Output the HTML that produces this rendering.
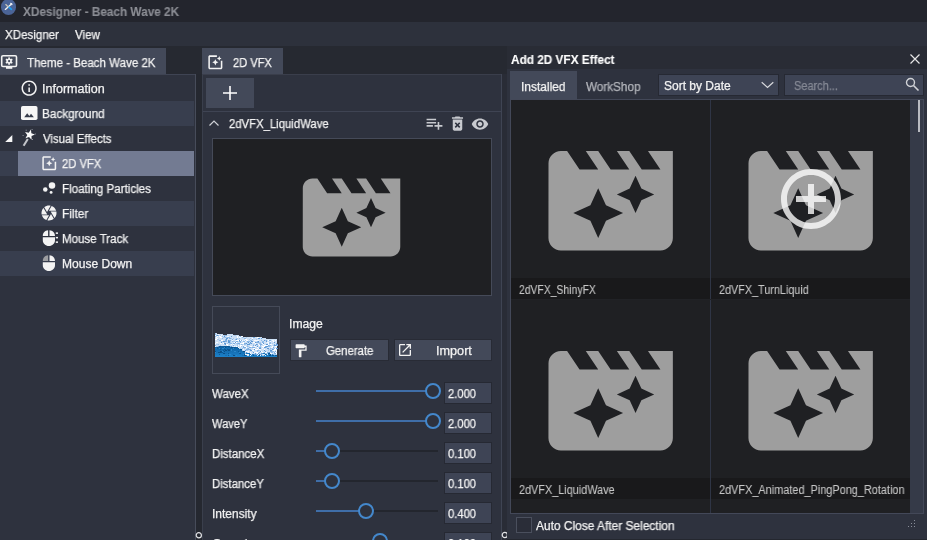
<!DOCTYPE html>
<html><head><meta charset="utf-8"><title>XDesigner - Beach Wave 2K</title>
<style>
html,body{margin:0;padding:0;}
body{width:927px;height:540px;overflow:hidden;background:#262931;position:relative;font-family:"Liberation Sans",sans-serif;font-size:12px;color:#f3f3f3;}
.a{position:absolute;}
.t{-webkit-text-stroke:0.25px;will-change:transform;position:absolute;white-space:nowrap;line-height:14px;transform-origin:0 50%;}
svg{position:absolute;overflow:visible;}
.tab{background:#434959;}
.panel{background:#2e323e;}
.row{left:0;width:194px;height:25px;}
.alt{background:#383e4e;}
.sel{background:#737b92;}
.btn{background:#434959;box-shadow:0 0 0 1px #282b35;}
.vbox{left:445px;width:46px;height:20px;background:#3e4455;box-shadow:0 0 0 1px #262933;}
.track{left:316px;width:122px;height:2px;background:#23262e;}
.fill{left:316px;height:2px;background:#3f6ea8;}
.thumb{width:12px;height:12px;border:2px solid #4488cc;border-radius:50%;background:#2e323e;}
.lab{background:#19191b;height:21px;}
.dot{width:1px;height:1px;background:#8a8e99;}
</style></head><body>
<div class="a" style="left:0;top:0;width:927px;height:22px;background:#23252d;"></div>
<div class="a" style="left:0;top:22px;width:927px;height:24px;background:#2d313c;"></div>
<!-- app icon -->
<div class="a" style="left:0.9px;top:-0.600px;width:15.4px;height:15.4px;border-radius:50%;background:#4b6497;"></div>
<svg style="left:0;top:0.400px" width="18" height="16" viewBox="0 0 18 16"><path d="M5.300 9.400L11.200 4.300" stroke="#f4f4f4" stroke-width="1.300" stroke-linecap="round" fill="none"/><path d="M10.200 3.300l1.500 0.300 0.300 1.500" stroke="#f4f4f4" stroke-width="1.100" fill="none"/><path d="M5.800 4.600L8.300 6.900" stroke="#c9c4b4" stroke-width="1.300" stroke-linecap="round"/><path d="M9.200 7.400L11.400 9.300" stroke="#1e9ef0" stroke-width="1.700" stroke-linecap="round"/></svg>

<!-- LEFT PANEL -->
<div class="a tab" style="left:0;top:48px;width:166px;height:26px;"></div>
<svg style="left:0;top:48px" width="20" height="26" viewBox="0 0 20 26"><rect x="1.700" y="7.700" width="14.800" height="10.800" rx="1.300" fill="none" stroke="#f3f3f3" stroke-width="1.600"/><rect x="6" y="19" width="6.300" height="1.800" fill="#f3f3f3"/><g fill="#f3f3f3"><circle cx="9.100" cy="13.100" r="2.700"/><rect x="8.300" y="9.400" width="1.600" height="7.400" /><rect x="8.300" y="9.400" width="1.600" height="7.400" transform="rotate(60 9.100 13.100)"/><rect x="8.300" y="9.400" width="1.600" height="7.400" transform="rotate(120 9.100 13.100)"/></g><circle cx="9.100" cy="13.100" r="1.100" fill="#434959"/></svg>
<div class="a panel" style="left:0;top:74px;width:196px;height:466px;"></div>
<div class="a" style="left:0;top:74px;width:196px;height:1px;background:#3f4453;"></div>
<div class="a" style="left:195px;top:74px;width:1px;height:466px;background:#474c5a;"></div>
<div class="a" style="left:196px;top:74px;width:6px;height:466px;background:#252830;"></div>
<div class="a row alt" style="top:101px;"></div>
<div class="a row alt" style="top:151px;"></div>
<div class="a row sel" style="top:151px;left:18px;width:176px;"></div>
<div class="a row alt" style="top:201px;"></div>
<div class="a row alt" style="top:251px;"></div>
<svg style="left:19.800px;top:78.600px" width="18.300" height="18.300" viewBox="0 0 24 24"><path fill="#f3f3f3" d="M11 17h2v-6h-2v6zm1-15C6.480 2 2 6.480 2 12s4.480 10 10 10 10-4.480 10-10S17.520 2 12 2zm0 18c-4.410 0-8-3.590-8-8s3.590-8 8-8 8 3.590 8 8-3.590 8-8 8zM11 9h2V7h-2v2z"/></svg>
<svg style="left:20.700px;top:106px" width="16.500" height="14" viewBox="0 0 16.500 14"><rect width="16.500" height="14" rx="1.800" fill="#f6f6f6"/><path d="M3.200 11.200l3-4 2.100 2.700 1.700-2.200 2.900 3.500z" fill="#363c4b"/></svg>
<svg style="left:0;top:126px" width="40" height="25" viewBox="0 0 40 25"><path d="M5.200 15.900h7.100V9.100z" fill="#f6f6f6"/><path d="M23.600 19.800L27.800 13" stroke="#c3c5ca" stroke-width="2.100" stroke-linecap="butt"/><polygon points="30.94,3.57 31.37,7.33 34.99,8.45 31.54,10.03 31.59,13.82 29.03,11.03 25.44,12.25 27.30,8.95 25.04,5.91 28.75,6.66" fill="#fafafa"/><g fill="#8f93a0"><rect x="25.700" y="3.700" width="1" height="1"/><rect x="31.600" y="3" width="1" height="1"/><rect x="34.800" y="7.500" width="1" height="1"/><rect x="22.600" y="9" width="1" height="1"/><rect x="32" y="13" width="1" height="1"/></g></svg>
<svg style="left:39.500px;top:154px" width="18.500" height="18.500" viewBox="0 0 24 24"><path fill="#f3f3f3" d="M19.020 10v9H5V5h9V3H5.020c-1.100 0-2 .9-2 2v14c0 1.100.9 2 2 2h14c1.100 0 2-.9 2-2v-9h-2zM17 10l.940-2.060L20 7l-2.060-.940L17 4l-.940 2.060L14 7l2.060.940zm-3.750.750L12 8l-1.250 2.750L8 12l2.750 1.250L12 16l1.250-2.750L16 12z"/></svg>
<svg style="left:40px;top:176px" width="20" height="25" viewBox="0 0 20 25"><circle cx="12" cy="9.400" r="3.250" fill="#f3f3f3"/><circle cx="5.300" cy="13.600" r="2.250" fill="#f3f3f3"/><circle cx="11.100" cy="16.400" r="1.450" fill="#f3f3f3"/></svg>
<svg style="left:39.700px;top:204.200px" width="18" height="18" viewBox="0 0 24 24"><path fill="#f3f3f3" d="M9.400 10.500l4.770-8.260C13.470 2.090 12.750 2 12 2c-2.400 0-4.600.850-6.320 2.250l3.660 6.350.060-.100zM21.540 9c-.920-2.920-3.150-5.260-6-6.340L11.880 9h9.660zm.260 1h-7.490l.290.500 4.760 8.250C21 16.970 22 14.610 22 12c0-.690-.070-1.350-.200-2zM8.540 12l-3.900-6.750C3.010 7.030 2 9.390 2 12c0 .690.070 1.350.200 2h7.490l-1.150-2zm-6.080 3c.920 2.920 3.150 5.260 6 6.340L12.120 15H2.460zm11.270 0l-3.900 6.760c.700.150 1.420.240 2.170.240 2.400 0 4.600-.850 6.320-2.250l-3.660-6.350-.930 1.600z"/></svg>
<svg style="left:40px;top:226px" width="20" height="25" viewBox="0 0 20 25"><path d="M2.800 9.900c0-3 2.200-5.500 5.300-5.600v5.600zM9.500 4.300c3.100 0.100 5.500 2.600 5.500 5.600H9.500zM2.800 11.200h12.200v3c0 3.200-2.700 5.800-6.100 5.800s-6.100-2.600-6.100-5.800z" fill="#f3f3f3"/><rect x="15.800" y="6.400" width="2.200" height="1.500" fill="#f3f3f3"/><rect x="15.800" y="10.900" width="2.200" height="1.500" fill="#f3f3f3"/><rect x="15.800" y="15.400" width="2.200" height="1.500" fill="#f3f3f3"/></svg>
<svg style="left:40px;top:251px" width="20" height="25" viewBox="0 0 20 25"><path d="M2.800 9.900c0-3 2.200-5.500 5.300-5.600v5.600z" fill="#9c9da0"/><path d="M9.500 4.300c3.100 0.100 5.500 2.600 5.500 5.600H9.500zM2.800 11.200h12.200v3c0 3.200-2.700 5.800-6.100 5.800s-6.100-2.600-6.100-5.800z" fill="#f3f3f3"/></svg>

<!-- MID PANEL -->
<div class="a tab" style="left:202px;top:48px;width:81px;height:26px;"></div>
<svg style="left:205.800px;top:52.700px" width="18.700" height="18.700" viewBox="0 0 24 24"><path fill="#f3f3f3" d="M19.020 10v9H5V5h9V3H5.020c-1.100 0-2 .9-2 2v14c0 1.100.9 2 2 2h14c1.100 0 2-.9 2-2v-9h-2zM17 10l.940-2.060L20 7l-2.060-.940L17 4l-.940 2.060L14 7l2.060.940zm-3.750.750L12 8l-1.250 2.750L8 12l2.750 1.250L12 16l1.250-2.750L16 12z"/></svg>
<div class="a panel" style="left:202px;top:74px;width:300px;height:466px;"></div>
<div class="a" style="left:202px;top:74px;width:300px;height:1px;background:#3a3e4b;"></div>
<div class="a" style="left:202px;top:74px;width:1px;height:466px;background:#3a3f4c;"></div>
<div class="a" style="left:501px;top:74px;width:1px;height:466px;background:#3f4453;"></div>
<div class="a" style="left:502px;top:74px;width:5px;height:466px;background:#292c36;"></div>
<div class="a tab" style="left:206px;top:78px;width:48px;height:30px;"></div>
<svg style="left:222px;top:85px" width="16" height="16" viewBox="0 0 16 16"><path d="M8 1v14M1 8h14" stroke="#fff" stroke-width="1.600" fill="none"/></svg>
<div class="a" style="left:203px;top:111px;width:298px;height:1px;background:#3f4453;"></div>
<svg style="left:209px;top:119px" width="10" height="8" viewBox="0 0 10 8"><path d="M0.500 6.500L5 2l4.500 4.500" stroke="#cfd1d6" stroke-width="1.200" fill="none"/></svg>
<svg style="left:424.800px;top:113.900px" width="19" height="19" viewBox="0 0 24 24"><path fill="#c8cacf" d="M14 10H2v2h12v-2zm0-4H2v2h12V6zm4 8v-4h-2v4h-4v2h4v4h2v-4h4v-2h-4zM2 16h8v-2H2v2z"/></svg>
<svg style="left:447.600px;top:114px" width="19" height="19" viewBox="0 0 24 24"><path fill="#c8cacf" d="M6 19c0 1.100.9 2 2 2h8c1.100 0 2-.9 2-2V7H6v12zm2.460-7.120l1.410-1.410L12 12.590l2.120-2.120 1.410 1.410L13.410 14l2.120 2.120-1.410 1.410L12 15.410l-2.120 2.120-1.410-1.410L10.590 14l-2.130-2.120zM15.500 4l-1-1h-5l-1 1H5v2h14V4z"/></svg>
<svg style="left:471px;top:115.300px" width="18" height="18" viewBox="0 0 24 24"><path fill="#c8cacf" d="M12 4.500C7 4.500 2.730 7.610 1 12c1.730 4.390 6 7.500 11 7.500s9.270-3.110 11-7.500c-1.730-4.390-6-7.500-11-7.500zM12 17c-2.760 0-5-2.240-5-5s2.240-5 5-5 5 2.240 5 5-2.240 5-5 5zm0-8c-1.660 0-3 1.340-3 3s1.340 3 3 3 3-1.340 3-3-1.340-3-3-3z"/></svg>
<div class="a" style="left:212px;top:138px;width:280px;height:158px;background:#1f2023;border:1px solid #454a58;box-sizing:border-box;"></div>
<svg style="left:293.450px;top:159.300px" width="117" height="117" viewBox="0 0 24 24"><path fill="#9e9e9e" d="M18 4l2 3h-3l-2-3h-2l2 3h-3l-2-3H8l2 3H7L5 4H4c-1.1 0-1.99.9-1.99 2L2 18c0 1.1.9 2 2 2h16c1.1 0 2-.9 2-2V4h-4zm-6.75 11.250L10 18l-1.250-2.750L6 14l2.750-1.250L10 10l1.250 2.750L14 14l-2.750 1.250zm5.690-3.310L16 14l-.940-2.060L13 11l2.060-.940L16 8l.940 2.060L19 11l-2.060.940z"/></svg>
<div class="a" style="left:212px;top:306px;width:68px;height:68px;border:1px solid #454a58;box-sizing:border-box;"></div>
<svg style="left:215px;top:332px" width="62.300" height="25" viewBox="0 0 63 25" preserveAspectRatio="none" shape-rendering="crispEdges">
<defs><linearGradient id="wg" x1="0" y1="0" x2="0" y2="1"><stop offset="0" stop-color="#0d5c9b"/><stop offset="1" stop-color="#1c80c8"/></linearGradient></defs>
<polygon points="0,1.0 3,1.8 6,2.4 9,2.6 12,2.5 15,2.4 18,2.5 21,2.8 24,3.5 27,4.2 30,4.8 33,5.1 36,5.0 39,4.9 42,4.8 45,5.1 48,5.6 51,6.3 54,7.0 57,7.3 60,7.4 63,7.3 63,24.500 0,24.500" fill="#cde0f5"/>
<polygon points="0,14.5 2,14.2 4,13.9 6,13.8 8,13.7 10,13.8 12,14.0 14,14.2 16,14.5 18,14.9 20,15.1 22,14.5 24,16.0 26,17.5 28,19.0 30,20.5 32,21.2 34,21.2 36,21.5 38,22.0 40,22.4 42,22.6 44,22.5 46,22.0 48,21.4 50,21.0 52,20.8 54,21.0 56,21.4 58,21.9 60,22.2 62,22.2 63,24.500 0,24.500" fill="url(#wg)"/>
<path fill="#a9c9ec" d="M0 1h1v1h-1zM5 3h1v1h-1zM19 3h2v1h-2zM8 5h1v1h-1zM9 5h1v1h-1zM11 5h1v1h-1zM28 5h1v1h-1zM31 5h1v1h-1zM16 6h1v1h-1zM18 6h1v1h-1zM21 6h2v1h-2zM35 6h1v1h-1zM2 7h1v1h-1zM3 7h1v1h-1zM34 7h1v1h-1zM41 7h1v1h-1zM30 8h1v1h-1zM44 8h1v1h-1zM51 8h1v1h-1zM6 9h2v1h-2zM15 9h1v1h-1zM18 9h1v1h-1zM19 9h1v1h-1zM9 10h1v1h-1zM15 10h1v1h-1zM32 10h1v1h-1zM45 10h2v1h-2zM55 10h1v1h-1zM12 11h1v1h-1zM14 11h1v1h-1zM21 11h1v1h-1zM58 11h1v1h-1zM1 12h2v1h-2zM9 12h1v1h-1zM14 12h1v1h-1zM22 12h1v1h-1zM24 12h1v1h-1zM27 12h1v1h-1zM30 12h1v1h-1zM38 12h1v1h-1zM5 13h1v1h-1zM22 13h1v1h-1zM32 13h1v1h-1zM42 13h1v1h-1zM59 13h1v1h-1zM1 14h2v1h-2zM26 14h1v1h-1zM33 14h1v1h-1zM46 14h1v1h-1zM36 15h1v1h-1zM25 16h1v1h-1zM29 16h1v1h-1zM57 16h2v1h-2zM59 16h2v1h-2zM54 17h2v1h-2zM56 17h1v1h-1zM27 18h1v1h-1zM31 18h2v1h-2zM44 18h2v1h-2zM54 18h1v1h-1zM37 19h1v1h-1zM60 22h2v1h-2z"/><path fill="#8fbbe8" d="M0 2h1v1h-1zM1 3h1v1h-1zM3 3h1v1h-1zM9 3h1v1h-1zM10 3h2v1h-2zM0 4h1v1h-1zM7 4h1v1h-1zM10 5h1v1h-1zM12 5h1v1h-1zM13 5h2v1h-2zM27 5h1v1h-1zM7 6h1v1h-1zM24 6h1v1h-1zM29 6h2v1h-2zM10 7h1v1h-1zM20 7h1v1h-1zM37 7h1v1h-1zM4 8h2v1h-2zM35 8h2v1h-2zM47 8h1v1h-1zM17 9h1v1h-1zM28 9h2v1h-2zM33 9h2v1h-2zM42 9h1v1h-1zM48 9h2v1h-2zM25 10h1v1h-1zM49 10h1v1h-1zM56 10h1v1h-1zM15 11h2v1h-2zM22 11h1v1h-1zM45 11h2v1h-2zM55 11h2v1h-2zM3 12h1v1h-1zM26 12h1v1h-1zM29 12h1v1h-1zM46 13h1v1h-1zM55 13h2v1h-2zM62 13h2v1h-2zM15 14h1v1h-1zM32 14h1v1h-1zM54 14h2v1h-2zM45 15h1v1h-1zM52 15h1v1h-1zM27 16h1v1h-1zM32 16h1v1h-1zM56 16h1v1h-1zM42 18h2v1h-2zM42 19h1v1h-1zM58 19h2v1h-2zM50 20h1v1h-1zM57 20h2v1h-2zM41 22h1v1h-1zM59 22h1v1h-1z"/><path fill="#f3f8fe" d="M3 2h1v1h-1zM0 3h1v1h-1zM6 3h1v1h-1zM12 4h2v1h-2zM24 5h2v1h-2zM1 6h2v1h-2zM17 8h1v1h-1zM27 8h1v1h-1zM29 8h1v1h-1zM39 8h2v1h-2zM41 8h1v1h-1zM42 8h2v1h-2zM58 8h2v1h-2zM30 9h1v1h-1zM56 9h1v1h-1zM1 10h2v1h-2zM53 10h2v1h-2zM0 11h1v1h-1zM5 11h2v1h-2zM25 11h2v1h-2zM40 11h1v1h-1zM48 11h1v1h-1zM54 11h1v1h-1zM16 12h1v1h-1zM43 12h1v1h-1zM44 12h1v1h-1zM57 12h1v1h-1zM23 13h1v1h-1zM28 13h1v1h-1zM0 14h1v1h-1zM19 14h1v1h-1zM29 14h1v1h-1zM39 14h2v1h-2zM49 15h1v1h-1zM57 15h2v1h-2zM43 16h1v1h-1zM48 16h1v1h-1zM28 17h1v1h-1zM44 17h1v1h-1zM46 17h1v1h-1zM32 19h2v1h-2zM62 19h1v1h-1zM33 20h1v1h-1zM35 20h1v1h-1zM39 20h2v1h-2zM35 21h1v1h-1zM42 21h1v1h-1zM56 21h2v1h-2zM43 22h2v1h-2z"/><path fill="#5d98d4" d="M2 3h1v1h-1zM9 4h1v1h-1zM16 4h1v1h-1zM11 6h2v1h-2zM43 6h1v1h-1zM44 6h2v1h-2zM47 6h1v1h-1zM11 7h1v1h-1zM21 7h1v1h-1zM13 8h1v1h-1zM24 8h1v1h-1zM50 8h1v1h-1zM8 9h2v1h-2zM13 9h2v1h-2zM36 9h2v1h-2zM43 9h2v1h-2zM52 9h1v1h-1zM6 10h1v1h-1zM13 10h1v1h-1zM14 10h1v1h-1zM20 10h1v1h-1zM33 10h1v1h-1zM35 10h1v1h-1zM40 10h1v1h-1zM60 10h1v1h-1zM9 11h2v1h-2zM31 11h1v1h-1zM36 11h1v1h-1zM49 11h1v1h-1zM10 12h1v1h-1zM32 12h1v1h-1zM33 12h2v1h-2zM41 12h1v1h-1zM52 12h2v1h-2zM62 12h2v1h-2zM40 13h1v1h-1zM60 13h2v1h-2zM3 14h1v1h-1zM16 14h1v1h-1zM42 14h1v1h-1zM52 14h2v1h-2zM50 15h2v1h-2zM45 16h2v1h-2zM53 16h2v1h-2zM62 16h2v1h-2zM39 17h1v1h-1zM58 17h1v1h-1zM30 18h1v1h-1zM35 18h2v1h-2zM50 18h1v1h-1zM56 18h2v1h-2zM46 19h1v1h-1zM51 19h1v1h-1zM31 20h1v1h-1zM38 20h1v1h-1zM55 20h1v1h-1zM40 21h1v1h-1zM43 21h1v1h-1zM47 21h2v1h-2zM39 22h2v1h-2zM42 22h1v1h-1z"/><path fill="#ffffff" d="M2 4h1v1h-1zM4 4h1v1h-1zM5 4h1v1h-1zM22 4h1v1h-1zM26 4h2v1h-2zM1 5h1v1h-1zM5 5h2v1h-2zM22 5h1v1h-1zM42 5h2v1h-2zM37 6h1v1h-1zM0 7h2v1h-2zM30 7h2v1h-2zM6 8h1v1h-1zM7 8h1v1h-1zM21 8h2v1h-2zM23 8h1v1h-1zM25 8h1v1h-1zM31 8h2v1h-2zM54 8h1v1h-1zM61 8h1v1h-1zM59 9h1v1h-1zM19 10h1v1h-1zM21 10h1v1h-1zM28 10h1v1h-1zM38 10h1v1h-1zM39 10h1v1h-1zM8 11h1v1h-1zM27 11h2v1h-2zM11 12h2v1h-2zM18 12h1v1h-1zM49 12h1v1h-1zM54 12h1v1h-1zM56 12h1v1h-1zM12 13h1v1h-1zM25 13h2v1h-2zM45 13h1v1h-1zM50 13h2v1h-2zM52 13h2v1h-2zM21 14h1v1h-1zM25 14h1v1h-1zM30 14h1v1h-1zM35 14h2v1h-2zM48 14h1v1h-1zM49 14h2v1h-2zM58 14h1v1h-1zM61 14h1v1h-1zM62 14h1v1h-1zM23 15h1v1h-1zM31 15h1v1h-1zM42 15h1v1h-1zM38 16h2v1h-2zM61 16h1v1h-1zM40 17h1v1h-1zM41 17h2v1h-2zM45 17h1v1h-1zM50 17h1v1h-1zM60 17h2v1h-2zM37 18h1v1h-1zM38 18h1v1h-1zM59 18h2v1h-2zM62 18h1v1h-1zM31 19h1v1h-1zM47 19h1v1h-1zM41 20h2v1h-2zM48 20h1v1h-1zM51 20h2v1h-2zM61 20h1v1h-1zM62 21h1v1h-1z"/><path fill="#7eaee0" d="M25 4h1v1h-1zM38 5h2v1h-2zM14 6h2v1h-2zM17 7h1v1h-1zM10 8h2v1h-2zM14 8h2v1h-2zM26 8h1v1h-1zM52 8h1v1h-1zM55 8h2v1h-2zM10 9h2v1h-2zM21 9h2v1h-2zM24 9h1v1h-1zM25 9h1v1h-1zM32 9h1v1h-1zM41 10h1v1h-1zM42 10h2v1h-2zM48 10h1v1h-1zM18 11h2v1h-2zM23 11h2v1h-2zM29 11h1v1h-1zM30 11h1v1h-1zM34 11h2v1h-2zM62 11h1v1h-1zM42 12h1v1h-1zM46 12h2v1h-2zM60 12h1v1h-1zM0 13h1v1h-1zM18 13h1v1h-1zM38 13h1v1h-1zM54 13h1v1h-1zM28 14h1v1h-1zM51 14h1v1h-1zM28 15h1v1h-1zM29 15h2v1h-2zM34 15h1v1h-1zM35 15h1v1h-1zM37 15h2v1h-2zM39 15h1v1h-1zM46 15h1v1h-1zM59 15h1v1h-1zM33 16h1v1h-1zM31 17h1v1h-1zM32 17h2v1h-2zM34 17h2v1h-2zM59 17h1v1h-1zM56 19h2v1h-2zM61 19h1v1h-1zM45 20h1v1h-1zM53 20h2v1h-2zM60 20h1v1h-1zM60 21h2v1h-2zM46 22h2v1h-2z"/><path fill="#0b5794" d="M4 14h2v1h-2zM9 14h2v1h-2zM12 14h2v1h-2zM19 15h2v1h-2zM2 16h1v1h-1zM23 16h1v1h-1zM5 17h1v1h-1zM9 17h1v1h-1zM10 17h1v1h-1zM12 17h1v1h-1zM13 17h2v1h-2zM25 17h2v1h-2zM8 18h1v1h-1zM23 19h1v1h-1zM6 20h2v1h-2zM13 21h1v1h-1zM24 21h2v1h-2zM54 21h2v1h-2zM4 22h1v1h-1zM29 22h1v1h-1zM51 22h1v1h-1zM13 23h1v1h-1zM29 23h2v1h-2zM38 23h1v1h-1zM58 23h2v1h-2zM61 23h2v1h-2z"/><path fill="#0a4f88" d="M2 15h1v1h-1zM10 15h1v1h-1zM16 15h2v1h-2zM10 18h2v1h-2zM13 18h2v1h-2zM0 19h1v1h-1zM5 19h2v1h-2zM9 19h1v1h-1zM28 19h2v1h-2zM3 20h1v1h-1zM4 20h2v1h-2zM8 21h2v1h-2zM56 22h1v1h-1zM18 23h2v1h-2zM45 23h1v1h-1zM55 23h2v1h-2z"/><path fill="#2a86c9" d="M9 15h1v1h-1zM4 16h1v1h-1zM7 16h2v1h-2zM18 16h1v1h-1zM16 17h1v1h-1zM16 18h1v1h-1zM7 19h1v1h-1zM19 19h2v1h-2zM0 20h1v1h-1zM24 20h1v1h-1zM14 22h2v1h-2zM28 22h1v1h-1zM58 22h1v1h-1zM21 23h1v1h-1zM44 23h1v1h-1zM60 23h1v1h-1z"/><path fill="#1670b5" d="M12 15h1v1h-1zM0 16h2v1h-2zM10 16h2v1h-2zM13 16h2v1h-2zM11 17h1v1h-1zM24 17h1v1h-1zM6 18h2v1h-2zM18 18h1v1h-1zM8 19h1v1h-1zM17 19h1v1h-1zM1 20h2v1h-2zM11 20h1v1h-1zM17 20h1v1h-1zM22 20h1v1h-1zM10 21h2v1h-2zM17 22h2v1h-2zM10 23h2v1h-2zM27 23h2v1h-2z"/><path fill="#9cc3ea" d="M30 21h1v1h-1zM51 21h1v1h-1zM52 21h2v1h-2zM57 22h1v1h-1zM48 23h2v1h-2z"/><path fill="#e8f2fc" d="M30 22h2v1h-2zM32 22h2v1h-2zM49 22h1v1h-1zM35 23h1v1h-1zM46 23h1v1h-1zM51 23h1v1h-1z"/><path fill="#cfe2f6" d="M36 22h1v1h-1zM48 22h1v1h-1zM50 22h1v1h-1zM53 22h1v1h-1zM32 23h2v1h-2zM42 23h1v1h-1z"/>
</svg>
<div class="a btn" style="left:291px;top:340px;width:97px;height:20px;"></div>
<div class="a btn" style="left:395px;top:340px;width:96px;height:20px;"></div>
<svg style="left:293.100px;top:342.500px" width="15.600" height="15.600" viewBox="0 0 24 24"><path fill="#f3f3f3" d="M18 4V3c0-.550-.450-1-1-1H5c-.550 0-1 .450-1 1v4c0 .550.450 1 1 1h12c.550 0 1-.450 1-1V6h1v4H9v11c0 .550.450 1 1 1h2c.550 0 1-.450 1-1v-9h8V4h-3z"/></svg>
<svg style="left:396.700px;top:342px" width="16" height="16" viewBox="0 0 24 24"><path fill="#f3f3f3" d="M19 19H5V5h7V3H5c-1.110 0-2 .9-2 2v14c0 1.100.890 2 2 2h14c1.100 0 2-.9 2-2v-7h-2v7zM14 3v2h3.590l-9.830 9.830 1.410 1.410L19 6.410V10h2V3h-7z"/></svg>

<div class="a track" style="top:390px"></div><div class="a fill" style="top:390px;width:110px"></div><div class="a thumb" style="left:425px;top:383px"></div>
<div class="a track" style="top:420px"></div><div class="a fill" style="top:420px;width:110px"></div><div class="a thumb" style="left:425px;top:413px"></div>
<div class="a track" style="top:450px"></div><div class="a fill" style="top:450px;width:10px"></div><div class="a thumb" style="left:324px;top:443px"></div>
<div class="a track" style="top:480px"></div><div class="a fill" style="top:480px;width:10px"></div><div class="a thumb" style="left:324px;top:473px"></div>
<div class="a track" style="top:510px"></div><div class="a fill" style="top:510px;width:44px"></div><div class="a thumb" style="left:358px;top:503px"></div>
<div class="a thumb" style="left:372px;top:533px"></div>
<div class="a vbox" style="top:383px"></div>
<div class="a vbox" style="top:413px"></div>
<div class="a vbox" style="top:443px"></div>
<div class="a vbox" style="top:473px"></div>
<div class="a vbox" style="top:503px"></div>
<div class="a vbox" style="top:533px"></div>
<svg style="left:195px;top:531px" width="8" height="8" viewBox="0 0 8 8"><circle cx="3.800" cy="4.200" r="2.600" fill="#252830" stroke="#e2e3e6" stroke-width="1.200"/></svg>
<svg style="left:498px;top:531px" width="8" height="8" viewBox="0 0 8 8"><circle cx="6.800" cy="4" r="2.600" fill="none" stroke="#e2e3e6" stroke-width="1.200"/></svg>

<!-- RIGHT PANEL -->
<div class="a" style="left:507px;top:46px;width:420px;height:23px;background:#292c35;"></div>
<div class="a panel" style="left:507px;top:69px;width:420px;height:471px;"></div>
<svg style="left:910px;top:54px" width="10" height="10" viewBox="0 0 10 10"><path d="M0.500 0.500l9 9M9.500 0.500l-9 9" stroke="#e6e6e6" stroke-width="1.200"/></svg>
<div class="a tab" style="left:510px;top:71px;width:67px;height:28px;"></div>
<div class="a" style="left:659px;top:75px;width:119px;height:20px;background:#3e4455;box-shadow:0 0 0 1px #262933;"></div>
<svg style="left:761px;top:81px" width="13" height="8" viewBox="0 0 13 8"><path d="M0.700 1.200l5.800 5.300L12.300 1.200" stroke="#d8d9dd" stroke-width="1.200" fill="none"/></svg>
<div class="a" style="left:785px;top:75px;width:138px;height:20px;background:#3e4455;box-shadow:0 0 0 1px #262933;"></div>
<svg style="left:905px;top:77px" width="15" height="15" viewBox="0 0 15 15"><circle cx="5.500" cy="5.500" r="4" stroke="#d0d2d6" stroke-width="1.400" fill="none"/><path d="M8.500 8.500l5 5" stroke="#d0d2d6" stroke-width="1.600"/></svg>

<div class="a" style="left:510px;top:99px;width:414px;height:415px;background:#353a48;border:1px solid #434858;box-sizing:border-box;"></div>
<div class="a" style="left:511px;top:100px;width:399px;height:413px;background:#1f2023;"></div>
<div class="a" style="left:710px;top:100px;width:1px;height:413px;background:#2f3545;"></div>
<div class="a" style="left:511px;top:299px;width:399px;height:1px;background:#212226;"></div>
<div class="a lab" style="left:511px;top:278px;width:199px;"></div>
<div class="a lab" style="left:711px;top:278px;width:199px;"></div>
<div class="a lab" style="left:511px;top:478px;width:199px;"></div>
<div class="a lab" style="left:711px;top:478px;width:199px;"></div>
<svg style="left:536.050px;top:126.200px" width="149.300" height="149.300" viewBox="0 0 24 24"><path fill="#9e9e9e" d="M18 4l2 3h-3l-2-3h-2l2 3h-3l-2-3H8l2 3H7L5 4H4c-1.1 0-1.99.9-1.99 2L2 18c0 1.1.9 2 2 2h16c1.1 0 2-.9 2-2V4h-4zm-6.75 11.250L10 18l-1.250-2.750L6 14l2.750-1.250L10 10l1.250 2.750L14 14l-2.750 1.250zm5.690-3.310L16 14l-.940-2.060L13 11l2.060-.940L16 8l.940 2.060L19 11l-2.060.940z"/></svg>
<svg style="left:736.050px;top:126.200px" width="149.300" height="149.300" viewBox="0 0 24 24"><path fill="#9e9e9e" d="M18 4l2 3h-3l-2-3h-2l2 3h-3l-2-3H8l2 3H7L5 4H4c-1.1 0-1.99.9-1.99 2L2 18c0 1.1.9 2 2 2h16c1.1 0 2-.9 2-2V4h-4zm-6.75 11.250L10 18l-1.250-2.750L6 14l2.750-1.250L10 10l1.250 2.750L14 14l-2.750 1.250zm5.690-3.310L16 14l-.940-2.060L13 11l2.060-.940L16 8l.940 2.060L19 11l-2.060.940z"/></svg>
<svg style="left:536.050px;top:326.200px" width="149.300" height="149.300" viewBox="0 0 24 24"><path fill="#9e9e9e" d="M18 4l2 3h-3l-2-3h-2l2 3h-3l-2-3H8l2 3H7L5 4H4c-1.1 0-1.99.9-1.99 2L2 18c0 1.1.9 2 2 2h16c1.1 0 2-.9 2-2V4h-4zm-6.75 11.250L10 18l-1.250-2.750L6 14l2.750-1.250L10 10l1.250 2.750L14 14l-2.750 1.250zm5.690-3.310L16 14l-.940-2.060L13 11l2.060-.940L16 8l.940 2.060L19 11l-2.060.940z"/></svg>
<svg style="left:736.050px;top:326.200px" width="149.300" height="149.300" viewBox="0 0 24 24"><path fill="#9e9e9e" d="M18 4l2 3h-3l-2-3h-2l2 3h-3l-2-3H8l2 3H7L5 4H4c-1.1 0-1.99.9-1.99 2L2 18c0 1.1.9 2 2 2h16c1.1 0 2-.9 2-2V4h-4zm-6.75 11.250L10 18l-1.250-2.750L6 14l2.750-1.250L10 10l1.250 2.750L14 14l-2.750 1.250zm5.690-3.310L16 14l-.940-2.060L13 11l2.060-.940L16 8l.940 2.060L19 11l-2.060.940z"/></svg>
<svg style="left:774.800px;top:163.200px" width="72" height="72" viewBox="0 0 24 24" opacity="0.780"><path fill="#ffffff" d="M13 7h-2v4H7v2h4v4h2v-4h4v-2h-4V7zm-1-5C6.480 2 2 6.480 2 12s4.480 10 10 10 10-4.480 10-10S17.520 2 12 2zm0 18c-4.410 0-8-3.590-8-8s3.590-8 8-8 8 3.590 8 8-3.590 8-8 8z"/></svg>
<div class="a" style="left:918px;top:100px;width:2px;height:32px;background:#b9bbc1;"></div>
<div class="a" style="left:516px;top:517px;width:16px;height:16px;border:1px solid #4a4f5d;box-sizing:border-box;background:#2a2d38;"></div>
<div class="a dot" style="left:914px;top:520px"></div>
<div class="a dot" style="left:911px;top:523px"></div><div class="a dot" style="left:914px;top:523px"></div>
<div class="a dot" style="left:908px;top:526px"></div><div class="a dot" style="left:911px;top:526px"></div><div class="a dot" style="left:914px;top:526px"></div>
<div class="a" style="left:507px;top:539px;width:420px;height:1px;background:#24272f;"></div>

<!-- TEXT -->
<div class="t" id="t0" style="left:22.99px;top:5px;color:#8b8d94;transform:scaleX(0.9824);font-weight:bold;-webkit-text-stroke:0.12px;">XDesigner - Beach Wave 2K</div>
<div class="t" id="t1" style="left:5.00px;top:28px;color:#f3f3f3;transform:scaleX(0.9643);">XDesigner</div>
<div class="t" id="t2" style="left:75.00px;top:28px;color:#f3f3f3;transform:scaleX(0.9623);">View</div>
<div class="t" id="t3" style="left:26.99px;top:56px;color:#f3f3f3;transform:scaleX(0.9624);">Theme - Beach Wave 2K</div>
<div class="t" id="t4" style="left:41.96px;top:82px;color:#f3f3f3;transform:scaleX(1.0441);">Information</div>
<div class="t" id="t5" style="left:41.54px;top:107px;color:#f3f3f3;transform:scaleX(0.9779);">Background</div>
<div class="t" id="t6" style="left:42.52px;top:132px;color:#f3f3f3;transform:scaleX(0.9473);">Visual Effects</div>
<div class="t" id="t7" style="left:62.04px;top:157px;color:#f3f3f3;transform:scaleX(0.9336);">2D VFX</div>
<div class="t" id="t8" style="left:62.05px;top:182px;color:#f3f3f3;transform:scaleX(0.9670);">Floating Particles</div>
<div class="t" id="t9" style="left:62.02px;top:207px;color:#f3f3f3;transform:scaleX(0.9847);">Filter</div>
<div class="t" id="t10" style="left:62.05px;top:232px;color:#f3f3f3;transform:scaleX(0.9618);">Mouse Track</div>
<div class="t" id="t11" style="left:61.99px;top:257px;color:#f3f3f3;transform:scaleX(1.0030);">Mouse Down</div>
<div class="t" id="t12" style="left:232.52px;top:56px;color:#f3f3f3;transform:scaleX(0.9240);">2D VFX</div>
<div class="t" id="t13" style="left:229.00px;top:117px;color:#f3f3f3;transform:scaleX(0.9434);">2dVFX_LiquidWave</div>
<div class="t" id="t14" style="left:289.48px;top:317px;color:#f3f3f3;transform:scaleX(1.0128);">Image</div>
<div class="t" id="t15" style="left:326.02px;top:344px;color:#f3f3f3;transform:scaleX(0.9482);">Generate</div>
<div class="t" id="t16" style="left:435.94px;top:344px;color:#f3f3f3;transform:scaleX(1.0549);">Import</div>
<div class="t" id="t17" style="left:212.48px;top:387px;color:#f3f3f3;transform:scaleX(0.9579);">WaveX</div>
<div class="t" id="t18" style="left:212.48px;top:417px;color:#f3f3f3;transform:scaleX(0.9265);">WaveY</div>
<div class="t" id="t19" style="left:211.52px;top:447px;color:#f3f3f3;transform:scaleX(0.9557);">DistanceX</div>
<div class="t" id="t20" style="left:211.53px;top:477px;color:#f3f3f3;transform:scaleX(0.9483);">DistanceY</div>
<div class="t" id="t21" style="left:211.51px;top:507px;color:#f3f3f3;transform:scaleX(0.9956);">Intensity</div>
<div class="t" id="t22" style="left:212.51px;top:537px;color:#f3f3f3;transform:scaleX(0.9944);">Speed</div>
<div class="t" id="t23" style="left:448.00px;top:387px;color:#f3f3f3;transform:scaleX(0.9339);">2.000</div>
<div class="t" id="t24" style="left:448.00px;top:417px;color:#f3f3f3;transform:scaleX(0.9339);">2.000</div>
<div class="t" id="t25" style="left:448.00px;top:447px;color:#f3f3f3;transform:scaleX(0.9339);">0.100</div>
<div class="t" id="t26" style="left:448.00px;top:477px;color:#f3f3f3;transform:scaleX(0.9339);">0.100</div>
<div class="t" id="t27" style="left:448.00px;top:507px;color:#f3f3f3;transform:scaleX(0.9339);">0.400</div>
<div class="t" id="t28" style="left:448.00px;top:537px;color:#f3f3f3;transform:scaleX(0.9339);">0.100</div>
<div class="t" id="t29" style="left:511.00px;top:53px;color:#ffffff;transform:scaleX(0.9829);font-weight:bold;-webkit-text-stroke:0.12px;">Add 2D VFX Effect</div>
<div class="t" id="t30" style="left:521.00px;top:80px;color:#f3f3f3;transform:scaleX(0.9956);">Installed</div>
<div class="t" id="t31" style="left:586.00px;top:80px;color:#b4b6bc;transform:scaleX(0.9751);">WorkShop</div>
<div class="t" id="t32" style="left:663.50px;top:79px;color:#f3f3f3;transform:scaleX(1.0001);">Sort by Date</div>
<div class="t" id="t33" style="left:793.53px;top:79px;color:#858995;transform:scaleX(0.9151);">Search...</div>
<div class="t" id="t34" style="left:518.54px;top:283px;color:#c6c6c6;transform:scaleX(0.8659);-webkit-text-stroke:0.08px;">2dVFX_ShinyFX</div>
<div class="t" id="t35" style="left:718.53px;top:283px;color:#c6c6c6;transform:scaleX(0.9010);-webkit-text-stroke:0.08px;">2dVFX_TurnLiquid</div>
<div class="t" id="t36" style="left:518.53px;top:483px;color:#c6c6c6;transform:scaleX(0.9048);-webkit-text-stroke:0.08px;">2dVFX_LiquidWave</div>
<div class="t" id="t37" style="left:718.51px;top:483px;color:#c6c6c6;transform:scaleX(0.9088);-webkit-text-stroke:0.08px;">2dVFX_Animated_PingPong_Rotation</div>
<div class="t" id="t38" style="left:536.00px;top:519px;color:#f3f3f3;transform:scaleX(0.9943);">Auto Close After Selection</div>
</body></html>
